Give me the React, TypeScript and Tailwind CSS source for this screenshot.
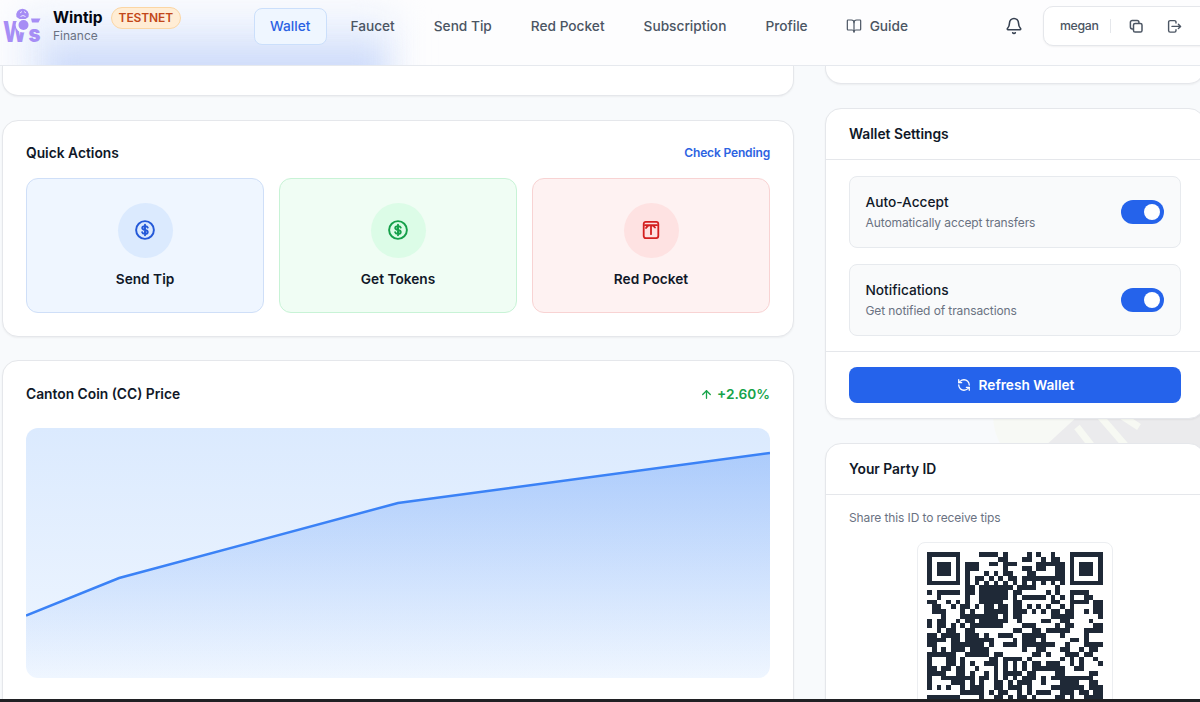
import { ArrowUp, Bell, BookOpen, RefreshCcw } from "lucide-react";

const navItems = [
  { label: "Wallet", active: true, className: "pl-[15px] pr-4" },
  { label: "Faucet", className: "pl-[22px] pr-[19px]" },
  { label: "Send Tip", className: "pl-[18px] pr-[19px]" },
  { label: "Red Pocket", className: "pl-[18px] pr-[19px]" },
  { label: "Subscription", className: "pl-[18px] pr-[19px]" },
  { label: "Profile", className: "pl-[18px] pr-[19px]" },
];

const qrRows = [
  "#######....####.#....#.#..#...#######",
  "#.....#........##...##..#.##..#.....#",
  "#.###.#.###..##.###....######.#.###.#",
  "#.###.#.###.....#...##.##..##.#.###.#",
  "#.###.#.#...#.#.##...##....##.#.###.#",
  "#.....#.#.##.#.#.##.#########.#.....#",
  "#######.#.#.#.#.#.#.#.#.#.#.#.#######",
  "........##.#######.####....#.........",
  "#.#####.##.######.##.....#.#..####...",
  "..#.....#..######.#.#####.#.#.#..##..",
  "##..#.#.#..#####..##......##..####.##",
  ".##..#.##.#.##.##.##.#.#.#..#.#....##",
  ".###...#.#..#####.###.#.#.##.##..#.##",
  "...#...########.#.##......#####.....#",
  "#.##..#.##.######..#....##..##....#..",
  "#.##.#.#.#######....###....#.##....##",
  "..#.##..##........##..##.#####...####",
  "##.####.###.#..###..#####...#....#...",
  "####.##.######....#.###.#.....##.#...",
  "##...#######.#..###.#######..#...####",
  ".#.#.###.####.......#..##...##..#.##.",
  "######..#####.##......##.#...###.##..",
  "#...##.#.....##.####.#......#.#.#..#.",
  "#...##.#.#..###.#.#.#.##.###..#.#...#",
  "##.##.##..#...#.#.#.#.#######..##....",
  "####..##.#..#.#.####.##....##.....##.",
  "#..#######.##.#.#.#.###.#.#########..",
  "#....###.#.#..##.#.###..#...####..##.",
  "#.#.#..#.###..##.###.#....#######.###",
  ".......#####.#.##..#.#.###..###.##.##",
  "#######....#..##.#.##.#....##.#..####",
];

function Logo() {
  return (
    <svg width="40" height="42" viewBox="0 0 40 42" fill="#a68df5" className="shrink-0 overflow-visible">
      <text x="0" y="36" fontFamily="Inter" fontWeight="800" fontSize="29" textLength="24" lengthAdjust="spacingAndGlyphs">W</text>
      <circle cx="20" cy="19" r="7.4" fill="#f5f8fe" />
      <text x="25.5" y="36" fontFamily="Inter" fontWeight="900" fontSize="23" textLength="12" lengthAdjust="spacingAndGlyphs">s</text>
      <path d="M28 12.5h9.5l-2 4h-6.5z" />
      <circle cx="20.5" cy="19" r="5" />
      <path d="M13.5 11a6.3 6.300 0 1 1 12 0l-3 2h-6z" />
      <path d="M17 7l2-1.5M21 5.500l2 1.500M17.500 10.500q2.500-2 5 0" fill="none" stroke="#eeeafe" strokeWidth="1" />
    </svg>
  );
}

function CoinIcon() {
  return (
    <svg width="22" height="22" viewBox="0 0 24 24" fill="none" stroke="currentColor" strokeWidth="2.1" strokeLinecap="round">
      <circle cx="12" cy="12" r="9.7" />
      <path d="M15 9.400C14.600 8.300 13.500 7.800 12 7.800c-1.800 0-3 .8-3 2.100 0 2.900 6 1.300 6 4.200 0 1.300-1.200 2.100-3 2.100-1.600 0-2.800-.6-3.100-1.700M12 6.200v11.600" />
    </svg>
  );
}

function PocketIcon() {
  return (
    <svg width="20" height="20" viewBox="0 0 20 20" fill="none" stroke="currentColor" strokeWidth="1.8" strokeLinecap="round" strokeLinejoin="round">
      <rect x="2.7" y="1.9" width="14.6" height="16.2" rx="2" />
      <path d="M4 5.200h12M10 5.200v9M10 5.200c-2 0-3.800.8-5 2.800M10 5.200c2 0 3 .8 4 2.300" />
    </svg>
  );
}

const actions = [
  { label: "Send Tip", icon: <CoinIcon />, card: "bg-[#eff6ff] border-[#cfdff8]", circle: "bg-[#dbeafe] text-[#2459d8]" },
  { label: "Get Tokens", icon: <CoinIcon />, card: "bg-[#f0fdf4] border-[#c8f3d6]", circle: "bg-[#dcfce7] text-[#16a04a]" },
  { label: "Red Pocket", icon: <PocketIcon />, card: "bg-[#fef2f2] border-[#f8d3d3]", circle: "bg-[#fee2e2] text-[#d32020]" },
];

function Header() {
  return (
    <header className="relative h-[66px] shrink-0 overflow-hidden border-b border-[#e6e9ee] bg-[#fdfdfe]">
      {/* glow behind the bar */}
      <div className="absolute left-[20px] top-[14px] h-[80px] w-[375px] bg-[#e8effd] blur-[18px]" />
      <div className="absolute left-[48px] top-[48px] h-[50px] w-[335px] bg-[#cfdcfa] blur-[14px]" />

      <div className="relative flex h-[53px] items-center">
        <div className="flex w-[254px] items-center pl-[3px]">
          <Logo />
          <div className="ml-[10px] pb-[2px]">
            <div className="flex h-[20px] items-center gap-2">
              <span className="text-[15.5px] font-bold leading-5 text-gray-950">Wintip</span>
              <span className="rounded-full border border-[#fbd6a4] bg-[#ffedd5] px-[7px] py-px text-[12px] font-semibold leading-[18px] tracking-[-0.1px] text-[#c2481a]">
                TESTNET
              </span>
            </div>
            <div className="text-[12px] leading-[15px] text-gray-500">Finance</div>
          </div>
        </div>

        <nav className="flex items-center text-[13.7px] font-medium text-[#4b5563]">
          {navItems.map((item) => (
            <a
              key={item.label}
              className={`flex h-[37px] items-center whitespace-nowrap rounded-lg border ${item.className} ${
                item.active ? "border-[#cbdffb] bg-[#eff6ff] text-[#2b62e3]" : "border-transparent"
              }`}
            >
              {item.label}
            </a>
          ))}
          <a className="flex items-center gap-2 pl-[18px]">
            <BookOpen size={16} strokeWidth={1.8} />
            Guide
          </a>
        </nav>

        <Bell size={18} strokeWidth={2.1} className="absolute left-[1005px] top-[17px] text-[#374151]" />
        <div className="absolute left-[1043px] top-[6px] flex h-[40px] w-[170px] items-center rounded-[10px] border border-[#e5e7eb] bg-white pl-4 text-[#4b5563] shadow-xs">
          <span className="w-[38px] whitespace-nowrap text-[12.3px] font-medium tracking-[-0.3px]">megan</span>
          <span className="ml-3 h-3.5 w-px bg-gray-200" />
          <svg className="ml-[18px]" width="15" height="15" viewBox="0 0 15 15" fill="none" stroke="currentColor" strokeWidth="1.5" strokeLinejoin="round">
            <rect x="4.5" y="4.5" width="8.5" height="8.5" rx="1.6" />
            <path d="M4.500 9.900H3.200A1.800 1.800 0 0 1 1.400 8.100V3.200a1.800 1.800 0 0 1 1.800-1.800h4.900a1.800 1.800 0 0 1 1.800 1.800V4.500" />
          </svg>
          <svg className="ml-[23px]" width="15" height="15" viewBox="0 0 15 15" fill="none" stroke="currentColor" strokeWidth="1.4" strokeLinecap="round" strokeLinejoin="round">
            <path d="M9 4V3.200a1.600 1.600 0 0 0-1.600-1.600H3.200a1.600 1.600 0 0 0-1.600 1.600v8.300a1.600 1.600 0 0 0 1.600 1.600h4.200A1.600 1.600 0 0 0 9 11.500v-.8" />
            <path d="M5 7.400h8.500M11.400 5.200l2.200 2.200-2.200 2.200" />
          </svg>
        </div>
      </div>
    </header>
  );
}

function Setting({ title, text }: { title: string; text: string }) {
  return (
    <div className="flex h-[72px] items-center justify-between rounded-lg border border-[#e7eaee] bg-[#f9fafb] pl-[15.5px] pr-4">
      <div className="pt-px">
        <div className="text-[13.7px] font-medium leading-5 text-gray-900">{title}</div>
        <div className="mt-px text-[12px] leading-5 tracking-[-0.1px] text-gray-500">{text}</div>
      </div>
      <div className="flex h-[24px] w-[43px] items-center justify-end rounded-full bg-[#2563eb] px-[4px]">
        <div className="h-4 w-4 rounded-full bg-white" />
      </div>
    </div>
  );
}

function PriceChart() {
  return (
    <svg className="mt-[23px] block h-[250px] w-full overflow-hidden rounded-xl" viewBox="0 0 743 250" preserveAspectRatio="none">
      <defs>
        <linearGradient id="chartBg" x1="0" y1="0" x2="0" y2="1">
          <stop offset="0" stopColor="#dbeafe" />
          <stop offset="1" stopColor="#eff6ff" />
        </linearGradient>
        <linearGradient id="chartFill" x1="0" y1="0" x2="0" y2="1">
          <stop offset="0" stopColor="#3b82f6" stopOpacity="0.3" />
          <stop offset="1" stopColor="#3b82f6" stopOpacity="0" />
        </linearGradient>
      </defs>
      <rect width="743" height="250" fill="url(#chartBg)" />
      <path d="M0 187.5L93 150L371.5 75L743 25V250H0Z" fill="url(#chartFill)" />
      <path d="M0 187.5L93 150L371.5 75L743 25" fill="none" stroke="#3b82f6" strokeWidth="2.5" />
    </svg>
  );
}

function QrCode() {
  return (
    <svg width="176" height="147.46" viewBox="0 0 37 31" fill="#1f2937" shapeRendering="crispEdges">
      {qrRows.map((row, y) =>
        row.split("").map((cell, x) =>
          cell === "#" ? <rect key={`${x}-${y}`} x={x} y={y} width="1" height="1" /> : null
        )
      )}
    </svg>
  );
}

export default function App() {
  return (
    <div className="relative flex h-[702px] w-[1200px] flex-col overflow-hidden bg-[#f8fafc] font-['Inter',sans-serif]">
      <Header />

      <main className="flex min-h-0 flex-1 gap-[31px] overflow-hidden pl-[2px]">
        {/* Left column */}
        <div className="flex w-[792px] shrink-0 flex-col gap-[23.5px]">
          <section className="h-[30px] shrink-0 rounded-b-2xl border border-t-0 border-[#e5e7eb] bg-white shadow-xs" />

          <section className="h-[217px] shrink-0 rounded-2xl border border-[#e5e7eb] bg-white px-[23px] pt-[23px] shadow-xs">
            <div className="flex h-5 items-center justify-between">
              <h2 className="text-[13.8px] font-semibold text-gray-900">Quick Actions</h2>
              <a className="pb-px text-[12px] font-semibold tracking-[-0.15px] text-[#2d63e2]">Check Pending</a>
            </div>
            <div className="mt-[14px] grid grid-cols-3 gap-[15px]">
              {actions.map((action) => (
                <button key={action.label} className={`flex h-[135px] flex-col items-center rounded-xl border pt-[24px] ${action.card}`}>
                  <span className={`flex h-[55px] w-[55px] items-center justify-center rounded-full ${action.circle}`}>
                    {action.icon}
                  </span>
                  <span className="mt-[11px] text-[13.7px] font-semibold leading-5 text-gray-900">{action.label}</span>
                </button>
              ))}
            </div>
          </section>

          <section className="h-[400px] shrink-0 rounded-2xl border border-[#e5e7eb] bg-white px-[23px] pt-[23.5px] shadow-xs">
            <div className="flex h-5 items-center justify-between">
              <h2 className="text-[13.8px] font-semibold text-gray-900">Canton Coin (CC) Price</h2>
              <span className="flex items-center gap-1 text-[13.7px] font-semibold text-[#16a34a]">
                <ArrowUp size={13} strokeWidth={2.4} />
                +2.60%
              </span>
            </div>
            <PriceChart />
          </section>
        </div>

        {/* Right column */}
        <div className="relative flex w-[380px] shrink-0 flex-col gap-[24px]">
          <svg className="absolute left-[160px] top-[348px]" width="220" height="34" viewBox="0 0 220 34">
            <path d="M8 0H100V34H18Q8 20 8 0Z" fill="#f7f9f5" />
            <path d="M95 0H220V34H58Z" fill="#ebebed" />
            <path d="M92 13L106 31M114 1L140 31M134 0L154 13" stroke="#f7f9f3" strokeWidth="7" />
          </svg>

          <section className="relative h-[18px] shrink-0 rounded-b-2xl border border-t-0 border-[#e5e7eb] bg-white shadow-xs" />

          <section className="relative h-[311px] shrink-0 rounded-2xl border border-[#e5e7eb] bg-white shadow-xs">
            <h2 className="flex h-[51px] items-center border-b border-[#e5e7eb] px-[23px] text-[13.8px] font-semibold text-gray-900">
              Wallet Settings
            </h2>
            <div className="flex h-[192px] flex-col gap-[15.5px] border-b border-[#e5e7eb] px-[23px] pt-4">
              <Setting title="Auto-Accept" text="Automatically accept transfers" />
              <Setting title="Notifications" text="Get notified of transactions" />
            </div>
            <div className="px-[23px] pt-[15px]">
              <button className="flex h-[36px] w-full items-center justify-center gap-2 rounded-lg bg-[#2563eb] pl-px text-[13.7px] font-semibold text-white">
                <RefreshCcw size={14} strokeWidth={2.2} />
                Refresh Wallet
              </button>
            </div>
          </section>

          <section className="relative h-[400px] shrink-0 rounded-2xl border border-[#e5e7eb] bg-white shadow-xs">
            <h2 className="flex h-[51px] items-center border-b border-[#e5e7eb] px-[23px] text-[13.8px] font-semibold text-gray-900">
              Your Party ID
            </h2>
            <p className="px-[23px] pt-[13px] text-[12px] leading-5 tracking-[-0.12px] text-gray-500">Share this ID to receive tips</p>
            <div className="mx-auto mt-[14px] w-[196px] rounded-lg border border-[#eceef1] bg-white p-[9px]">
              <QrCode />
            </div>
          </section>
        </div>
      </main>

      {/* bottom edge */}
      <div className="relative h-[3px] shrink-0 bg-[#202124]" />
    </div>
  );
}
